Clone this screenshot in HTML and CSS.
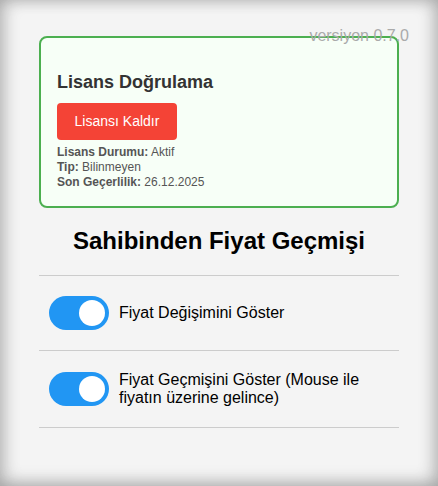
FILE: index.html
```html
<!DOCTYPE html>
<html lang="tr">
<head>
<meta charset="utf-8">
<title>Sahibinden Fiyat Geçmişi</title>
<link rel="stylesheet" href="styles.css">
</head>
<body>
<div class="page">
  <div class="version">versiyon 0.7.0</div>
  <div class="container">
    <section class="license-card">
      <h3 class="license-title">Lisans Doğrulama</h3>
      <button class="remove-btn" type="button">Lisansı Kaldır</button>
      <div class="license-info">
        <div><strong>Lisans Durumu:</strong> Aktif</div>
        <div><strong>Tip:</strong> Bilinmeyen</div>
        <div><strong>Son Geçerlilik:</strong> 26.12.2025</div>
      </div>
    </section>
    <h2 class="main-title">Sahibinden Fiyat Geçmişi</h2>
    <div class="settings">
      <label class="setting-row">
        <span class="switch on"><span class="knob"></span></span>
        <span class="setting-label">Fiyat Değişimini Göster</span>
      </label>
      <label class="setting-row">
        <span class="switch on"><span class="knob"></span></span>
        <span class="setting-label">Fiyat Geçmişini Göster (Mouse ile fiyatın üzerine gelince)</span>
      </label>
    </div>
  </div>
</div>
</body>
</html>
```
FILE: styles.css
```css
html, body {
  margin: 0;
  padding: 0;
}
body {
  background: #f4f4f4;
  font-family: "Liberation Sans", Arial, sans-serif;
}
.page {
  position: relative;
  min-height: 486px;
  box-sizing: border-box;
  padding-top: 36px;
  box-shadow: inset 0 -4px 18px rgba(0, 0, 0, 0.16), inset 6px 0 16px rgba(0, 0, 0, 0.13), inset -6px 0 16px rgba(0, 0, 0, 0.13);
}
.version {
  position: absolute;
  top: 27px;
  right: 29px;
  font-size: 16px;
  color: #aaa;
}
.container {
  width: 360px;
  margin: 0 auto;
}
.license-card {
  box-sizing: border-box;
  width: 360px;
  border: 2px solid #4caf50;
  border-radius: 8px;
  background: #f7fff7;
  padding: 16px;
}
.license-title {
  margin: 18px 0 10px;
  font-size: 18px;
  font-weight: bold;
  color: #333;
}
.remove-btn {
  display: block;
  width: 120px;
  border: none;
  border-radius: 4px;
  background: #f44336;
  color: #fff;
  font-family: inherit;
  font-size: 14px;
  line-height: 17px;
  padding: 10px 0;
  text-align: center;
  white-space: nowrap;
}
.license-info {
  margin-top: 5px;
  font-size: 12px;
  line-height: 15px;
  color: #555;
}
.license-info strong {
  color: #555;
}
.main-title {
  margin: 19px 0 0;
  padding-bottom: 20px;
  text-align: center;
  font-size: 24px;
  font-weight: bold;
  color: #000;
  border-bottom: 1px solid #ccc;
  line-height: 28px;
}
.setting-row {
  display: flex;
  align-items: center;
  gap: 10px;
  padding: 20px 10px;
  border-bottom: 1px solid #ccc;
}
.switch {
  flex: none;
  position: relative;
  width: 60px;
  height: 34px;
  border-radius: 17px;
  background: #ccc;
}
.switch.on {
  background: #2196f3;
}
.knob {
  position: absolute;
  top: 4px;
  left: 4px;
  width: 26px;
  height: 26px;
  border-radius: 50%;
  background: #fff;
}
.switch.on .knob {
  left: 30px;
}
.setting-label {
  font-size: 16px;
  line-height: 18px;
  color: #000;
}
```
